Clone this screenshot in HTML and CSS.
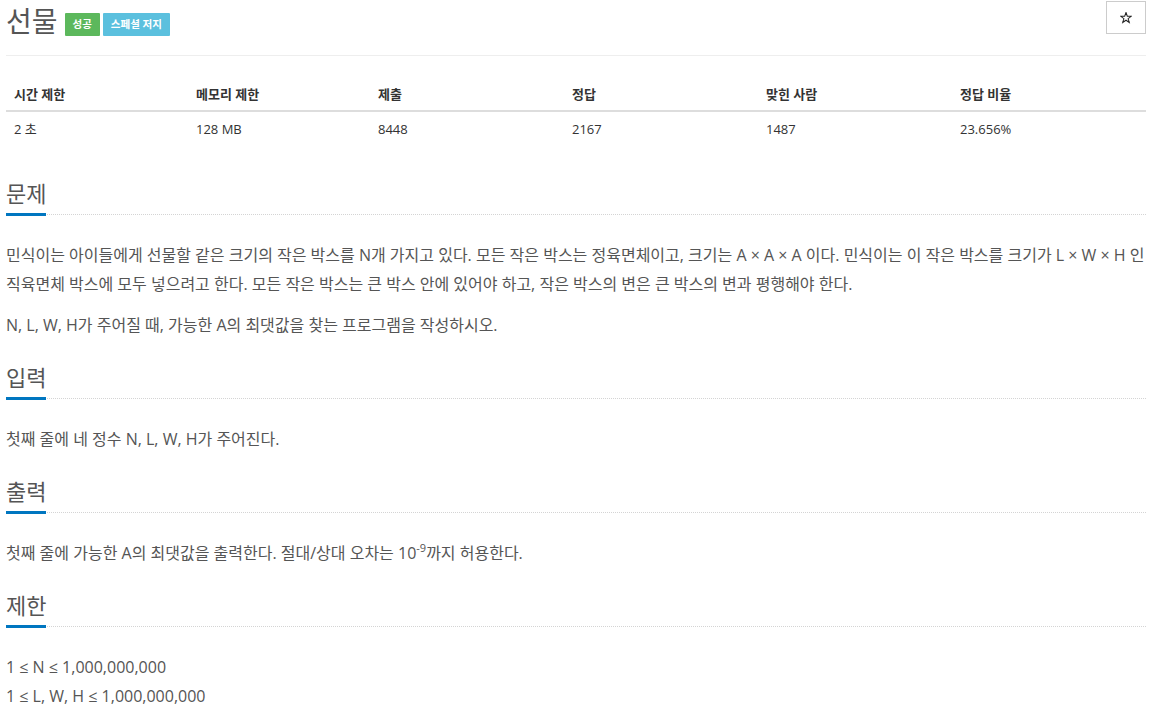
FILE: index.html
```html
<!DOCTYPE html>
<html lang="ko">
<head>
<meta charset="utf-8">
<title>선물</title>
<link rel="stylesheet" href="styles.css">
</head>
<body>
<div class="page">
  <header class="page-header">
    <h1 class="title">
      <span class="title-text">선물</span>
      <span class="label label-success">성공</span>
      <span class="label label-info">스페셜 저지</span>
    </h1>
    <button class="star-btn" type="button" aria-label="즐겨찾기">
      <svg width="12" height="12" viewBox="-0.5 -0.5 13 13"><polygon points="6,0 7.41,4.06 11.7,4.15 8.28,6.74 9.53,10.85 6,8.4 2.47,10.85 3.72,6.74 0.3,4.15 4.59,4.06" fill="none" stroke="#222" stroke-width="1.1" stroke-linejoin="miter"/></svg>
    </button>
  </header>

  <table class="info-table">
    <thead>
      <tr><th>시간 제한</th><th>메모리 제한</th><th>제출</th><th>정답</th><th>맞힌 사람</th><th>정답 비율</th></tr>
    </thead>
    <tbody>
      <tr><td>2 초</td><td>128 MB</td><td>8448</td><td>2167</td><td>1487</td><td>23.656%</td></tr>
    </tbody>
  </table>

  <section class="problem-section">
    <div class="headline"><h2>문제</h2></div>
    <div class="section-text">
      <p>민식이는 아이들에게 선물할 같은 크기의 작은 박스를 N개 가지고 있다. 모든 작은 박스는 정육면체이고, 크기는 A × A × A 이다. 민식이는 이 작은 박스를 크기가 L × W × H 인 직육면체 박스에 모두 넣으려고 한다. 모든 작은 박스는 큰 박스 안에 있어야 하고, 작은 박스의 변은 큰 박스의 변과 평행해야 한다.</p>
      <p>N, L, W, H가 주어질 때, 가능한 A의 최댓값을 찾는 프로그램을 작성하시오.</p>
    </div>
  </section>

  <section class="problem-section">
    <div class="headline"><h2>입력</h2></div>
    <div class="section-text">
      <p>첫째 줄에 네 정수 N, L, W, H가 주어진다.</p>
    </div>
  </section>

  <section class="problem-section">
    <div class="headline"><h2>출력</h2></div>
    <div class="section-text">
      <p>첫째 줄에 가능한 A의 최댓값을 출력한다. 절대/상대 오차는 10<sup>-9</sup>까지 허용한다.</p>
    </div>
  </section>

  <section class="problem-section">
    <div class="headline"><h2>제한</h2></div>
    <div class="section-text">
      <p>1 ≤ N ≤ 1,000,000,000<br>1 ≤ L, W, H ≤ 1,000,000,000</p>
    </div>
  </section>
</div>
</body>
</html>
```

FILE: styles.css
```css
html, body {
  margin: 0;
  padding: 0;
  background: #fff;
}

body {
  font-family: "Open Sans", "Noto Sans CJK KR", "DejaVu Sans", sans-serif;
  color: #555;
}

.page {
  width: 1140px;
  margin-left: 6px;
}

/* ---------- header ---------- */
.page-header {
  display: flex;
  justify-content: space-between;
  align-items: flex-start;
  height: 54px;
  padding-top: 1px;
  border-bottom: 1px solid #eee;
}

.title {
  margin: 2px 0 0;
  display: flex;
  align-items: center;
  font-size: 28px;
  line-height: 36px;
  font-weight: 400;
  color: #555;
}

.label {
  display: inline-block;
  margin-top: 7px;
  height: 23px;
  padding: 0 8px;
  font-size: 10.5px;
  line-height: 23px;
  font-weight: 700;
  color: #fff;
  border-radius: 1px;
}

.label-success {
  background: #5cb85c;
  margin-left: 7px;
}

.label-info {
  background: #5bc0de;
  margin-left: 3px;
}

.star-btn {
  width: 40px;
  height: 33px;
  box-sizing: border-box;
  margin: 0;
  padding: 0;
  border: 1px solid #ccc;
  background: #fff;
  display: flex;
  align-items: center;
  justify-content: center;
}

/* ---------- table ---------- */
.info-table {
  width: 1140px;
  margin: 20px 0 34px;
  border-collapse: collapse;
  table-layout: fixed;
  font-size: 13px;
  color: #333;
}

.info-table th,
.info-table td {
  text-align: left;
  padding: 8px;
  line-height: 19px;
}

.info-table th {
  padding-top: 9px;
  padding-bottom: 6px;
  font-weight: 700;
  border-bottom: 2px solid #ddd;
}

.info-table th:nth-child(1),
.info-table th:nth-child(2) {
  width: 166px;
}

/* ---------- sections ---------- */
.problem-section + .problem-section {
  margin-top: 25px;
}

.headline {
  display: flex;
  border-bottom: 1px dotted #d4d4d4;
}

.headline h2 {
  margin: 0 0 -2px;
  padding-bottom: 8px;
  font-size: 22px;
  line-height: 24px;
  font-weight: 400;
  color: #555;
  border-bottom: 3px solid #0076c0;
}

.section-text {
  margin-top: 26px;
  display: flex;
  flex-direction: column;
  gap: 12px;
}

.section-text p {
  margin: 0;
  font-size: 16px;
  line-height: 29px;
  color: #555;
}

.section-text sup {
  font-size: 11px;
  line-height: 0;
  vertical-align: 7px;
}
```
